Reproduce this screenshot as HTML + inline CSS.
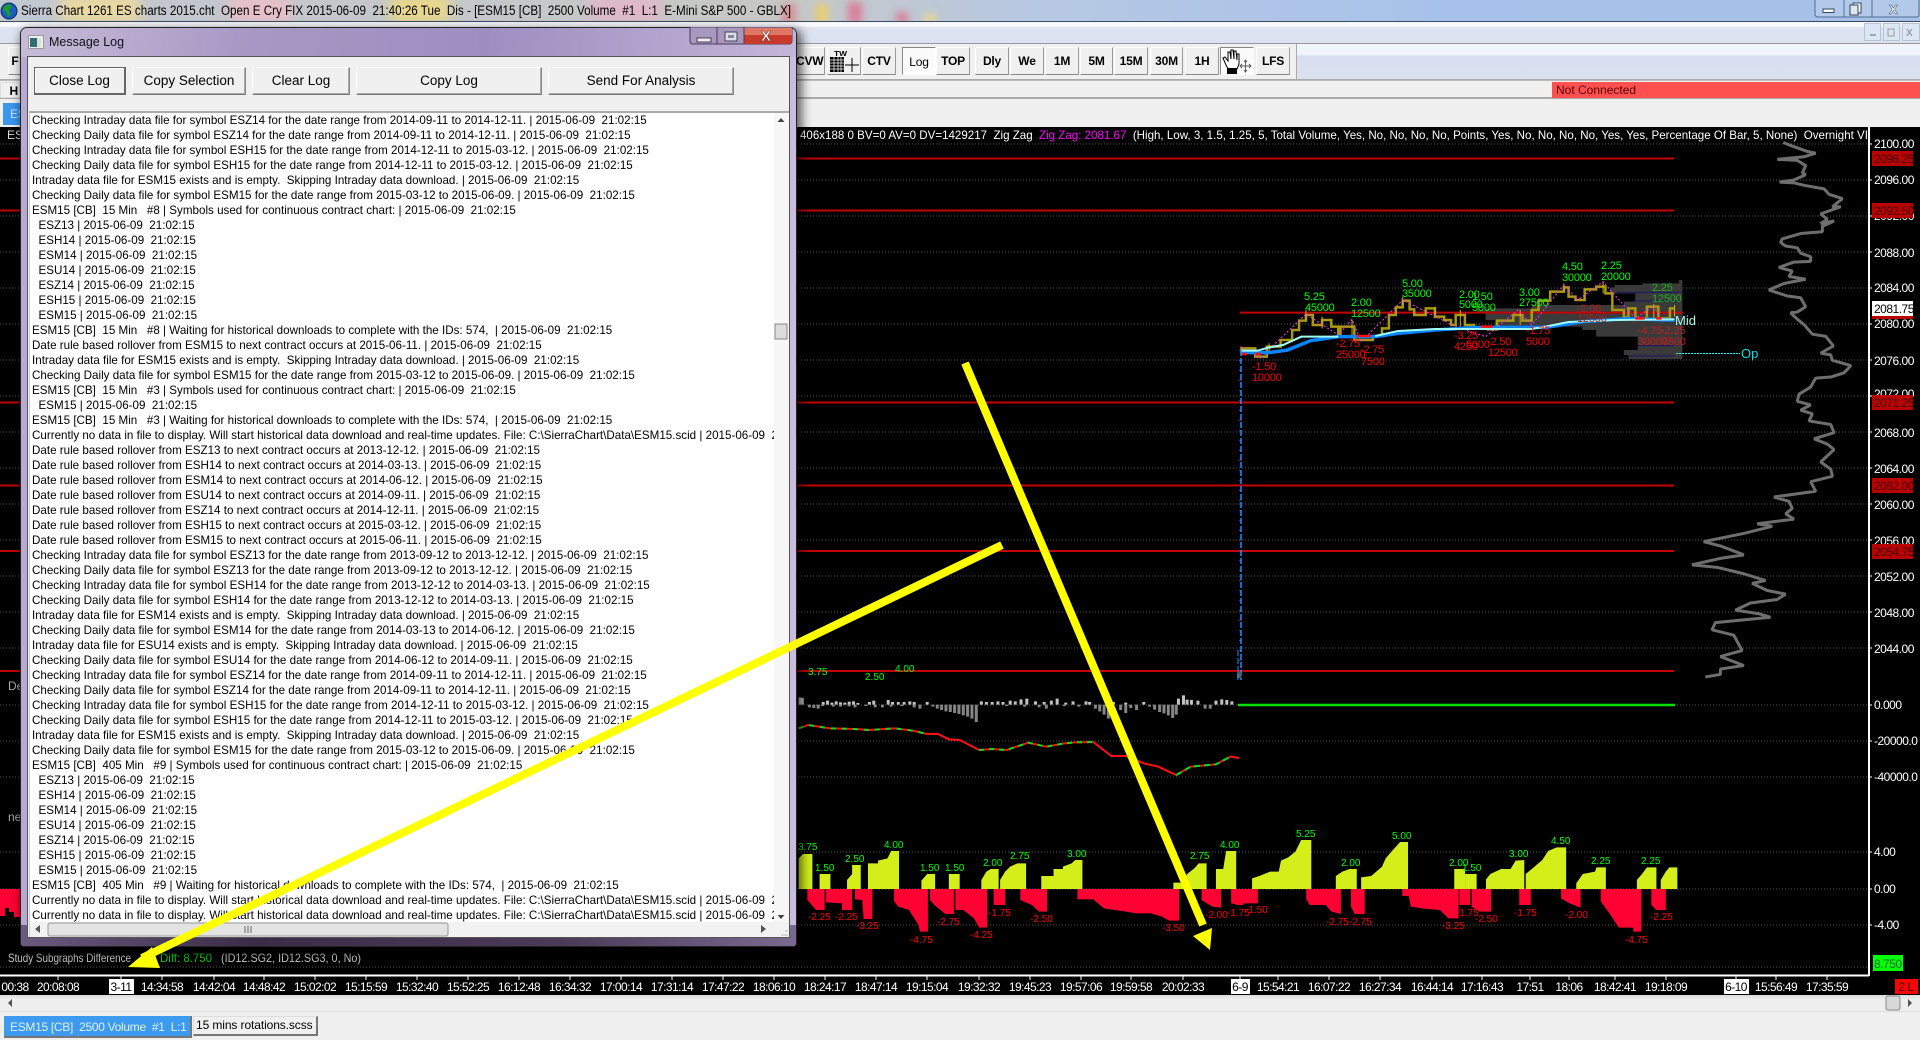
<!DOCTYPE html>
<html><head><meta charset="utf-8"><title>Sierra Chart</title>
<style>
html,body{margin:0;padding:0;width:1920px;height:1040px;overflow:hidden;background:#f0f0f0;font-family:"Liberation Sans",sans-serif}
.a{position:absolute}
.tb{position:absolute;top:47px;height:28px;background:#f0f0f0;border:1px solid;border-color:#fff #999 #888 #fff;box-sizing:border-box;font:bold 12px/26px "Liberation Sans",sans-serif;color:#000;text-align:center;letter-spacing:-.2px}
.btn{position:absolute;top:67px;height:28px;background:#f0f0f0;border:1px solid;border-color:#fff #888 #777 #fff;box-shadow:inset -1px -1px 0 #aaa;box-sizing:border-box;font:13.500px/25px "Liberation Sans",sans-serif;color:#000;text-align:center}
#log{position:absolute;left:2px;top:0;width:800px;font:12px/15px "Liberation Sans",sans-serif;color:#000;transform:scaleX(.968);transform-origin:0 0}
#log div{height:15px;white-space:pre}
svg text{font-family:"Liberation Sans",sans-serif}
</style></head><body>

<!-- title bar -->
<div class="a" style="left:0;top:0;width:1920px;height:21px;background:linear-gradient(90deg,#c2c8d2 0,#c7c8c5 40%,#b6c8e4 55%,#a7c2ea 75%,#a6c0e6 100%);overflow:hidden">
 <div class="a" style="left:60px;top:-6px;width:80px;height:30px;background:#ead9a0;filter:blur(7px)"></div>
 <div class="a" style="left:230px;top:-6px;width:60px;height:30px;background:#e8c0c8;filter:blur(7px)"></div>
 <div class="a" style="left:390px;top:-6px;width:60px;height:30px;background:#e9d78a;filter:blur(7px)"></div>
 <div class="a" style="left:590px;top:-6px;width:70px;height:30px;background:#e0b8c8;filter:blur(7px)"></div>
 <div class="a" style="left:782px;top:4px;width:14px;height:20px;background:#d89098;filter:blur(4px)"></div>
 <div class="a" style="left:816px;top:4px;width:12px;height:20px;background:#e8cf70;filter:blur(4px)"></div>
 <div class="a" style="left:848px;top:2px;width:14px;height:22px;background:#d88098;filter:blur(4px)"></div>
 <div class="a" style="left:896px;top:12px;width:12px;height:12px;background:#d88098;filter:blur(4px)"></div>
 <div class="a" style="left:924px;top:14px;width:12px;height:10px;background:#e8d890;filter:blur(4px)"></div>
</div>
<svg class="a" style="left:0;top:0" width="1920" height="21">
 <circle cx="9" cy="11" r="8" fill="#1a5cc0" stroke="#0a2a60"/><path d="M4 6l5-2 3 3-3 3 2 4-3 3-2-5-3-2z" fill="#1c9a2c"/>
 <text x="21" y="15" font-size="13.500" fill="#000" textLength="770" lengthAdjust="spacingAndGlyphs" xml:space="preserve">Sierra Chart 1261 ES charts 2015.cht  Open E Cry FIX 2015-06-09  21:40:26 Tue  Dis - [ESM15 [CB]  2500 Volume  #1  L:1  E-Mini S&amp;P 500 - GBLX]</text>
 <g fill="none" stroke="#4f6f96"><path d="M1815 0v14q0 3 3 3h99q2 0 2-3V0" fill="#c9daf0" fill-opacity=".35"/><path d="M1844 0v17M1872 0v17"/></g>
 <rect x="1823" y="9" width="11" height="3.500" fill="#fff" stroke="#34465e"/>
 <rect x="1853" y="3" width="8" height="10" fill="#fff" stroke="#34465e"/><rect x="1850" y="5" width="8" height="10" fill="#dfe6f0" stroke="#34465e"/>
 <text x="1889" y="14" font-size="13" font-weight="bold" fill="#fff" stroke="#34465e" stroke-width=".5">X</text>
</svg>
<div class="a" style="left:0;top:21px;width:1920px;height:1px;background:#3a4a60"></div>

<!-- menu bar -->
<div class="a" style="left:0;top:22px;width:1920px;height:21px;background:linear-gradient(#f4f6fb 0,#fafbfd 20%,#dfe4f2 25%,#dce2f1 100%);border-bottom:1px solid #999"></div>
<div class="a" style="left:1864px;top:23px;width:17px;height:18px;background:#dbe7f4;border:1px solid #b8c4d4;box-sizing:border-box"></div>
<div class="a" style="left:1883px;top:23px;width:17px;height:18px;background:#dbe7f4;border:1px solid #b8c4d4;box-sizing:border-box"></div>
<div class="a" style="left:1902px;top:23px;width:18px;height:18px;background:#dbe7f4;border:1px solid #b8c4d4;box-sizing:border-box"></div>
<svg class="a" style="left:1864px;top:23px" width="56" height="18"><rect x="6" y="11" width="6" height="2" fill="#9aa"/><rect x="24" y="6" width="6" height="7" fill="none" stroke="#999"/><text x="42" y="13" font-size="10" font-weight="bold" fill="#99a">X</text></svg>

<!-- toolbar -->
<div class="a" style="left:0;top:44px;width:1920px;height:35px;background:linear-gradient(#f2f4fa 0,#f2f4fa 30%,#d8deef 35%,#dce1f0 100%);border-bottom:1px solid #aaa"></div>
<div class="a" style="left:0;top:44px;width:1297px;height:35px;background:#f0f0f0;border-right:1px solid #aaa;box-sizing:border-box"></div>
<div class="tb" style="left:8px;width:14px">F</div>
<div class="tb" style="left:795px;width:30px;text-align:right;padding-right:2px">CVW</div>
<div class="tb" style="left:827px;width:34px"></div>
<svg class="a" style="left:827px;top:47px" width="34" height="28">
 <text x="7" y="9" font-size="7" font-weight="bold" fill="#000" textLength="13" lengthAdjust="spacingAndGlyphs">TW</text>
 <rect x="3" y="10" width="14" height="15" fill="#000"/><path d="M3 13h14M3 16h14M3 19h14M3 22h14M7 10v15M11 10v15M14 10v15" stroke="#fff" stroke-width=".7"/>
 <path d="M18 18h14M25 11v14" stroke="#000" stroke-width="1"/>
</svg>
<div class="tb" style="left:862px;width:34px">CTV</div>
<div class="tb" style="left:902px;width:34px;background:#fbfbfb;border-color:#888 #fff #fff #888;font-weight:normal;line-height:28px">Log</div>
<div class="tb" style="left:936px;width:34px">TOP</div>
<div class="tb" style="left:975px;width:34px">Dly</div>
<div class="tb" style="left:1010px;width:34px">We</div>
<div class="tb" style="left:1045px;width:34px">1M</div>
<div class="tb" style="left:1080px;width:33px">5M</div>
<div class="tb" style="left:1114px;width:34px">15M</div>
<div class="tb" style="left:1150px;width:33px">30M</div>
<div class="tb" style="left:1185px;width:34px">1H</div>
<div class="tb" style="left:1220px;width:34px;background:#fbfbfb;border-color:#888 #fff #fff #888"></div>
<svg class="a" style="left:1220px;top:47px" width="34" height="28">
 <path d="M6 18L3 11l2-1 3 4V5l2 0 1 7V3h2l1 9V4l2 0 1 9V7h2v10l-2 5H8z" fill="#fff" stroke="#000" stroke-width="1"/>
 <rect x="7" y="21" width="10" height="6" fill="#000"/>
 <path d="M20 19h11M25.500 13v12M22 17l-2 2 2 2M29 17l2 2-2 2M24 15l1.500-2 1.500 2M24 23l1.500 2 1.500-2" fill="none" stroke="#555" stroke-width=".9"/>
</svg>
<div class="tb" style="left:1256px;width:34px">LFS</div>

<!-- status row -->
<div class="a" style="left:0;top:80px;width:1920px;height:19px;background:#f0f0f0;border-top:1px solid #bbb;border-bottom:2px solid #aaa;box-sizing:border-box"></div>
<div class="tb" style="left:0;top:82px;height:16px;width:20px;font:bold 12px/16px 'Liberation Sans',sans-serif;text-align:right;padding-right:1px;border-color:#ddd">H</div>
<div class="a" style="left:1552px;top:82px;width:368px;height:16px;background:#ff5050;font:12px/17px 'Liberation Sans',sans-serif;color:#500;padding-left:4px;box-sizing:border-box">Not Connected</div>
<div class="a" style="left:0;top:100px;width:1920px;height:27px;background:#f0f0f0"></div>
<div class="a" style="left:3px;top:103px;width:20px;height:22px;background:#3a97ee;color:#cfe6ff;font:12px/22px 'Liberation Sans',sans-serif;padding-left:7px;box-sizing:border-box">ES</div>

<!-- chart -->
<div class="a" style="left:0;top:127px;width:1920px;height:868px;background:#000"></div>
<svg class="a" style="left:0;top:0" width="1920" height="1040" font-size="11">
 <!-- gridlines -->
 <g stroke="#555" stroke-width="1" stroke-dasharray="1 2">
  <path d="M0 144H1869M0 180H1869M0 216H1869M0 252H1869M0 288H1869M0 324H1869M0 360H1869M0 396H1869M0 432H1869M0 468H1869M0 504H1869M0 540H1869M0 576H1869M0 612H1869M0 648H1869M0 705H1869M0 741H1869M0 777H1869M0 852H1869M0 889H1869M0 925H1869M0 967H1869"/>
 </g>
 <!-- red lines -->
 <g stroke="#c40000" stroke-width="2">
  <path d="M0 158.500H1674M0 210.500H1674M0 402.500H1674M0 485.500H1674M0 551H1674M0 671H1674"/>
 </g>
 <text x="7" y="139" font-size="12" fill="#ddd">ES</text>
 <text x="8" y="690" font-size="12" fill="#aaa">De</text>
 <text x="8" y="821" font-size="12" fill="#aaa">ne</text>
 <path d="M0 889H20V917H14V912H9V908H5V916H0Z" fill="#ff0033"/>

 <!-- VAP and price cluster -->
 <g transform="translate(1200,230) scale(.4607,.33333)">
  <path d="M1047 150H1040V160H960V165H900V172H890V190H945V215H920V225H720V235H620V240H600V250H620V270H640V290H830V300H860V320H950V345H950V360H920V375H930V387H1047Z" fill="#3a3a3a"/>
  <path d="M905 187H1045M940 213H1045M950 347H1030M930 378H1030" fill="none" stroke="#17176a" stroke-width="1" vector-effect="non-scaling-stroke"/>
  <path d="M87 248H1048" stroke="#c40000" stroke-width="2" vector-effect="non-scaling-stroke"/>
  <path d="M90 368V355H120V380H145V350H175V330H200V300H215V272H230V255H245V285H265V270H285V290H300V312H305V290H335V330H375V318H395V295H410V255H425V232H440V212H455V238H465V255H490V235H510V260H530V270H545V285H555V255H575V285H595V292H625V298H645V272H680V255H700V272H720V240H735V212H760V185H790V172H800V200H815V210H835V178H860V170H880V190H895V240H920V262H930V235H945V265H970V230H995V265H1020V235H1030" fill="none" stroke="#a89a10" stroke-width="2.500" vector-effect="non-scaling-stroke"/>
  <path d="M150 340V372M230 240V270M265 260V295M330 270V320M440 200V225M510 230V265M565 240V290M695 240V285M790 160V185M875 155V190M985 222V265M1030 225V260" stroke="#c8b400" stroke-width="1" vector-effect="non-scaling-stroke"/>
  <path d="M88 350L130 385 230 252 300 315 330 268 350 335 440 210 555 290 620 320 690 240 720 285 790 165 820 210 875 155 945 265 985 228 1005 280" fill="none" stroke="#ff30ff" stroke-width="1" stroke-dasharray="2 2" vector-effect="non-scaling-stroke"/>
  <path d="M90 368H150L190 360 240 332 300 320H380L430 310 510 300 600 292H750L830 275 930 266 1030 270" fill="none" stroke="#0a84ff" stroke-width="3.500" vector-effect="non-scaling-stroke"/>
  <path d="M90 362H125L150 352 180 345 220 320H300M380 318L430 303 510 297H720L750 290 800 276 900 270 1030 268" fill="none" stroke="#9ffff5" stroke-width="2" vector-effect="non-scaling-stroke"/>
  <path d="M90 372h12M120 372h12M340 318h30M610 290h25M945 265h20M990 265h12" stroke="#ff1010" stroke-width="2.500" vector-effect="non-scaling-stroke"/>
 </g>
 <path d="M1241 350V680" stroke="#1e90ff" stroke-width="1.500" stroke-dasharray="6 2"/>
 <path d="M1240 350V680" stroke="#d040d0" stroke-width="1" stroke-dasharray="1 9"/>
 <rect x="1237" y="672" width="4" height="6" fill="#555"/>

 <g fill="#00ff00" letter-spacing="-.2">
  <text x="1304" y="300">5.25</text><text x="1305" y="311">45000</text>
  <text x="1351" y="306">2.00</text><text x="1351" y="317">12500</text>
  <text x="1402" y="287">5.00</text><text x="1402" y="297">35000</text>
  <text x="1459" y="298">2.00</text><text x="1459" y="308">5000</text>
  <text x="1472" y="300">1.50</text><text x="1472" y="311">5000</text>
  <text x="1519" y="296">3.00</text><text x="1519" y="306">27500</text>
  <text x="1562" y="270">4.50</text><text x="1562" y="281">30000</text>
  <text x="1601" y="269">2.25</text><text x="1601" y="280">20000</text>
  <text x="1652" y="291" fill="#19b319">2.25</text><text x="1652" y="302" fill="#19b319">12500</text>
 </g>
 <g fill="#ff0000" letter-spacing="-.2">
  <text x="1252" y="370">-1.50</text><text x="1252" y="381">10000</text>
  <text x="1336" y="347">-2.75</text><text x="1336" y="358">25000</text>
  <text x="1360" y="353">-2.75</text><text x="1361" y="365">7500</text>
  <text x="1454" y="339">-3.25</text><text x="1454" y="350">4250</text><text x="1466" y="348">5000</text>
  <text x="1487" y="345">-2.50</text><text x="1488" y="356">12500</text>
  <text x="1526" y="334">-1.75</text><text x="1526" y="345">5000</text>
  <text x="1577" y="312" fill="#c01818">-2.00</text><text x="1577" y="322" fill="#a82020">12500</text>
  <text x="1638" y="334" fill="#c02020">-4.75</text><text x="1661" y="334" fill="#c02020">-2.25</text>
  <text x="1638" y="345" fill="#d01818">30000</text><text x="1662" y="345" fill="#d01818">7500</text>
 </g>
 <text x="1675" y="325" font-size="13" fill="#a0fff0">Mid</text>
 <path d="M1676 353.500H1740" stroke="#00ffff" stroke-dasharray="2 1"/>
 <text x="1741" y="358" font-size="13" fill="#00e0e0">Op</text>

 <!-- overnight profile -->
 <g transform="translate(1600,130) scale(.3344,.357)">
  <polyline fill="none" stroke="#6e6e6e" stroke-width="3" vector-effect="non-scaling-stroke" stroke-linejoin="bevel" points="548,35 575,45 620,60 645,65 610,75 530,82 590,85 615,100 605,120 615,125 580,140 537,146 580,148 610,155 670,165 685,180 725,192 695,215 720,215 660,235 680,250 660,262 700,255 665,270 665,285 600,290 545,305 540,315 555,325 590,330 600,345 630,355 630,368 580,370 535,385 575,395 565,410 615,418 550,430 505,448 560,465 600,470 615,495 590,510 570,512 590,530 610,545 635,572 675,578 698,605 660,625 690,630 695,645 750,660 730,680 690,692 645,695 630,720 595,740 590,760 630,770 600,785 635,795 625,815 690,825 700,848 640,865 680,880 700,895 660,930 690,950 695,970 630,985 645,1012 520,1028 565,1040 575,1060 555,1075 580,1090 470,1103 515,1110 430,1130 310,1153 360,1165 430,1190 360,1200 275,1218 350,1225 430,1243 495,1262 455,1270 500,1290 555,1300 530,1315 450,1325 405,1345 475,1355 510,1365 345,1380 335,1400 400,1415 425,1458 360,1475 430,1500 360,1510 360,1525 315,1532"/>
 </g>

 <!-- header text -->
 <svg x="797" y="127" width="1071" height="20">
  <text x="3" y="12" font-size="12" fill="#fff" xml:space="preserve" textLength="1068" lengthAdjust="spacingAndGlyphs">406x188 0 BV=0 AV=0 DV=1429217  Zig Zag  <tspan fill="#ff00ff">Zig Zag: 2081.67</tspan>  (High, Low, 3, 1.5, 1.25, 5, Total Volume, Yes, No, No, No, No, Points, Yes, No, No, No, No, Yes, Yes, Percentage Of Bar, 5, None)  Overnight VI</text>
 </svg>

 <!-- lower panel shapes -->
 <g transform="translate(790,650) scale(.7220,.33333)">
  <g fill="#d4ee1a">
   <path d="M12 717V625L18 612H31V717Z"/><path d="M41 717V672H56V717Z"/><path d="M79 717V690L86 672V645H98V717Z"/><path d="M108 717V640H122V632L135 625 140 603H151V717Z"/><path d="M182 717V692L190 672H201V717Z"/><path d="M220 717V672H235V717Z"/><path d="M265 717V690L272 665 278 657H289V717Z"/><path d="M291 717V690L298 665 305 650 315 640H327V717Z"/><path d="M348 717V678H365V657H378V650L390 640 395 630H405V717Z"/><path d="M531 717V698H545L550 672 560 655 566 640H577V717Z"/><path d="M590 717V657H600L604 603H618V717Z"/><path d="M640 717V685L650 678 665 665H677L680 632 690 622 700 605 708 570H722V717Z"/><path d="M756 717V678L765 665 775 657H785V717Z"/><path d="M791 717V682L805 678 812 665 820 650 825 625 835 600 845 576H856V717Z"/><path d="M920 717V657H935V717Z"/><path d="M935 717V672H951V717Z"/><path d="M964 717V688L970 672 985 657H998L1005 632 1017 630V717Z"/><path d="M1019 717V672L1030 652 1042 630 1050 603 1062 592H1075V717Z"/><path d="M1089 717V700L1098 672 1115 665 1117 652H1130V717Z"/><path d="M1173 717V690L1180 672 1187 652H1200V717Z"/><path d="M1206 717V690L1213 665 1218 652H1229V717Z"/>
  </g>
  <g fill="#ff0033">
   <path d="M24 717V750L36 780H48V717Z"/><path d="M50 717V757L72 760V780H86V717Z"/><path d="M90 717V748L100 750 102 807H114V717Z"/><path d="M144 717V753L150 770 165 780 178 825 180 845H191V717Z"/><path d="M194 717V750L200 765 215 792H227V717Z"/><path d="M229 717V780H240L255 805 262 833H273V717Z"/><path d="M282 717V765H298V717Z"/><path d="M319 717V750L335 765 345 785H356V717Z"/><path d="M398 717V748H420L435 775 450 780 465 785 480 790H500L515 800 525 812H539V717Z"/><path d="M570 717V750L585 770 597 773V717Z"/><path d="M611 717V760L620 765H628V760H648V717Z"/><path d="M715 717V748L720 765H742L750 785 763 792V717Z"/><path d="M777 717V770L782 792H796V717Z"/><path d="M848 717V738H857L860 770 875 775 900 780 912 805H926V717Z"/><path d="M927 717V765H942V717Z"/><path d="M944 717V770L955 785H971V717Z"/><path d="M1010 717V765H1026V717Z"/><path d="M1068 717V745L1080 760 1095 773V717Z"/><path d="M1123 717V755L1135 790 1148 833H1168V845H1179V717Z"/><path d="M1193 717V765L1200 780H1213V717Z"/>
  </g>
  <!-- delta bars -->
  <path d="M14 164v-22M17 164v-20M46 164v-8M52 164v-12M58 164v-6M64 164v-10M70 164v-7M76 164v-6M82 164v-9M88 164v-10M94 164v-5M110 164v-8M116 164v-12M136 164v-14M142 164v-8M150 164v-8M158 164v-8M166 164v-10M172 164v-8M190 164v-8M265 164v-10M272 164v-8M280 164v-8M288 164v-10M295 164v-8M305 164v-12M312 164v-10M320 164v-16M328 164v-18M340 164v-10M352 164v-8M362 164v-12M370 164v-18M382 164v-6M392 164v-10M410 164v-10M415 164v-8M448 164v-8M465 164v-6M490 164v-8M538 164v-18M545 164v-28M550 164v-15M556 164v-14M565 164v-12M590 164v-12M598 164v-16M605 164v-14M612 164v-10" fill="none" stroke="#c2c2c2" stroke-width="3" vector-effect="non-scaling-stroke"/>
  <path d="M27 164v8M33 164v10M39 164v12M45 164v4M60 164v6M70 164v6M82 164v5M90 164v8M105 164v4M118 164v8M128 164v8M140 164v6M155 164v4M172 164v8M180 164v12M198 164v6M204 164v12M210 164v16M216 164v20M222 164v22M228 164v25M234 164v28M240 164v32M246 164v36M252 164v42M258 164v52M300 164v4M325 164v6M345 164v8M355 164v12M380 164v4M400 164v6M423 164v12M429 164v20M435 164v30M441 164v42M458 164v16M465 164v25M472 164v10M480 164v16M498 164v6M505 164v15M512 164v22M518 164v26M524 164v32M530 164v40M535 164v30M575 164v12M582 164v12" fill="none" stroke="#858585" stroke-width="3" vector-effect="non-scaling-stroke"/>
  <polyline fill="none" stroke="#ff1010" stroke-width="2" vector-effect="non-scaling-stroke" points="12,235 25,225 40,230 55,235 90,237 110,240 145,235 170,242 190,252 205,252 220,268 235,270 262,300 280,297 300,300 330,278 355,290 380,280 395,277 420,276 445,318 465,318 490,340 510,350 535,375 555,350 590,343 610,320 622,324"/>
  <polyline fill="none" stroke="#00e020" stroke-width="2" vector-effect="non-scaling-stroke" stroke-dasharray="5 6" points="12,235 25,225 40,230 55,235 90,237 110,240 145,235 170,242 190,252"/>
  <polyline fill="none" stroke="#00e020" stroke-width="2" vector-effect="non-scaling-stroke" stroke-dasharray="5 5" points="262,300 280,297 300,300 330,278 355,290 380,280 395,277 420,276"/>
  <polyline fill="none" stroke="#00e020" stroke-width="2" vector-effect="non-scaling-stroke" stroke-dasharray="6 4" points="535,375 555,350 590,343 610,320"/>
 </g>
 <path d="M1238 705H1675" stroke="#00e000" stroke-width="2.500"/>
 <path d="M1238 650V680" stroke="#1e90ff" stroke-dasharray="6 2"/>
 <g fill="#00ff00" font-size="10">
  <text x="808" y="675">3.75</text><text x="865" y="680">2.50</text><text x="895" y="672">4.00</text>
  <text x="798" y="850">3.75</text><text x="815" y="871">1.50</text><text x="845" y="862">2.50</text><text x="884" y="848">4.00</text><text x="920" y="871">1.50</text><text x="945" y="871">1.50</text><text x="983" y="866">2.00</text><text x="1010" y="859">2.75</text><text x="1067" y="857">3.00</text><text x="1190" y="859">2.75</text><text x="1220" y="848">4.00</text><text x="1296" y="837">5.25</text><text x="1341" y="866">2.00</text><text x="1392" y="839">5.00</text><text x="1449" y="866">2.00</text><text x="1462" y="871">1.50</text><text x="1509" y="857">3.00</text><text x="1551" y="844">4.50</text><text x="1591" y="864">2.25</text><text x="1641" y="864">2.25</text>
 </g>
 <g fill="#ff0000" font-size="10">
  <text x="808" y="920">-2.25</text><text x="835" y="920">-2.25</text><text x="856" y="929">-3.25</text><text x="910" y="943">-4.75</text><text x="937" y="925">-2.75</text><text x="970" y="938">-4.25</text><text x="988" y="916">-1.75</text><text x="1030" y="922">-2.50</text><text x="1162" y="931">-3.50</text><text x="1205" y="918">-2.00</text><text x="1227" y="916">-1.75</text><text x="1245" y="913">-1.50</text><text x="1326" y="925">-2.75</text><text x="1349" y="925">-2.75</text><text x="1442" y="929">-3.25</text><text x="1456" y="916">-1.75</text><text x="1475" y="922">-2.50</text><text x="1514" y="916">-1.75</text><text x="1565" y="918">-2.00</text><text x="1625" y="943">-4.75</text><text x="1650" y="920">-2.25</text>
 </g>

 <!-- axes -->
 <path d="M1869 127V976M0 975.500H1869" stroke="#fff" stroke-width="2" fill="none"/>
 <g fill="#fff" font-size="12" letter-spacing="-.5">
  <text x="1874" y="148">2100.00</text><text x="1874" y="184">2096.00</text><text x="1874" y="220">2092.00</text><text x="1874" y="257">2088.00</text><text x="1874" y="292">2084.00</text><text x="1874" y="328">2080.00</text><text x="1874" y="365">2076.00</text><text x="1874" y="398">2072.00</text><text x="1874" y="437">2068.00</text><text x="1874" y="473">2064.00</text><text x="1874" y="509">2060.00</text><text x="1874" y="545">2056.00</text><text x="1874" y="581">2052.00</text><text x="1874" y="617">2048.00</text><text x="1874" y="653">2044.00</text>
  <text x="1874" y="709">0.000</text><text x="1874" y="745">-20000.0</text><text x="1874" y="781">-40000.0</text><text x="1874" y="856">4.00</text><text x="1874" y="893">0.00</text><text x="1874" y="929">-4.00</text>
 </g>
 <g stroke="#fff"><path d="M1869 144h3M1869 180h3M1869 216h3M1869 252h3M1869 288h3M1869 324h3M1869 360h3M1869 396h3M1869 432h3M1869 468h3M1869 504h3M1869 540h3M1869 576h3M1869 612h3M1869 648h3M1869 705h3M1869 741h3M1869 777h3M1869 852h3M1869 889h3M1869 925h3"/></g>
 <g fill="#bb0000">
  <rect x="1872" y="151" width="41" height="15"/><rect x="1872" y="203" width="41" height="15"/><rect x="1872" y="395" width="41" height="15"/><rect x="1872" y="478" width="41" height="15"/><rect x="1872" y="544" width="41" height="15"/>
 </g>
 <rect x="1872" y="301" width="41" height="15" fill="#fff"/><rect x="1872" y="316" width="41" height="3" fill="#bb0000"/>
 <rect x="1873" y="955" width="30" height="16" fill="#00ff00"/>
 <g font-size="12" letter-spacing="-.5" fill="#400">
  <text x="1874" y="163">2098.25</text><text x="1874" y="215">2092.50</text><text x="1874" y="407">2071.25</text><text x="1874" y="490">2062.00</text><text x="1874" y="556">2054.75</text>
  <text x="1874" y="313" fill="#000">2081.75</text><text x="1874" y="968" fill="#063">8.750</text>
 </g>

 <!-- x axis -->
 <g stroke="#fff"><path d="M58 976v4M121 976v4M162 976v4M214 976v4M264 976v4M315 976v4M366 976v4M417 976v4M468 976v4M519 976v4M570 976v4M621 976v4M672 976v4M723 976v4M774 976v4M825 976v4M876 976v4M927 976v4M979 976v4M1030 976v4M1081 976v4M1131 976v4M1183 976v4M1240 976v4M1278 976v4M1329 976v4M1380 976v4M1432 976v4M1482 976v4M1530 976v4M1569 976v4M1615 976v4M1666 976v4M1736 976v4M1776 976v4M1827 976v4"/></g>
 <rect x="109" y="979" width="25" height="15" fill="#fff"/><rect x="1231" y="979" width="19" height="15" fill="#fff"/><rect x="1724" y="979" width="25" height="15" fill="#fff"/><rect x="1895" y="979" width="23" height="15" fill="#ff0000"/>
 <g font-size="12" fill="#fff" text-anchor="middle" letter-spacing="-.55">
  <text x="15" y="991">00:38</text><text x="58" y="991">20:08:08</text><text x="162" y="991">14:34:58</text><text x="214" y="991">14:42:04</text><text x="264" y="991">14:48:42</text><text x="315" y="991">15:02:02</text><text x="366" y="991">15:15:59</text><text x="417" y="991">15:32:40</text><text x="468" y="991">15:52:25</text><text x="519" y="991">16:12:48</text><text x="570" y="991">16:34:32</text><text x="621" y="991">17:00:14</text><text x="672" y="991">17:31:14</text><text x="723" y="991">17:47:22</text><text x="774" y="991">18:06:10</text><text x="825" y="991">18:24:17</text><text x="876" y="991">18:47:14</text><text x="927" y="991">19:15:04</text><text x="979" y="991">19:32:32</text><text x="1030" y="991">19:45:23</text><text x="1081" y="991">19:57:06</text><text x="1131" y="991">19:59:58</text><text x="1183" y="991">20:02:33</text><text x="1278" y="991">15:54:21</text><text x="1329" y="991">16:07:22</text><text x="1380" y="991">16:27:34</text><text x="1432" y="991">16:44:14</text><text x="1482" y="991">17:16:43</text><text x="1530" y="991">17:51</text><text x="1569" y="991">18:06</text><text x="1615" y="991">18:42:41</text><text x="1666" y="991">19:18:09</text><text x="1776" y="991">15:56:49</text><text x="1827" y="991">17:35:59</text>
  <text x="121" y="991" fill="#000">3-11</text><text x="1240" y="991" fill="#000">6-9</text><text x="1736" y="991" fill="#000">6-10</text><text x="1906" y="991" fill="#300">2 L</text>
 </g>
 <text x="8" y="962" font-size="12" fill="#c8c8c8" xml:space="preserve" textLength="123" lengthAdjust="spacingAndGlyphs">Study Subgraphs Difference</text>
 <text x="160" y="962" font-size="12" fill="#00d000" textLength="52" lengthAdjust="spacingAndGlyphs">Diff: 8.750</text>
 <text x="221" y="962" font-size="12" fill="#c8c8c8" textLength="140" lengthAdjust="spacingAndGlyphs">(ID12.SG2, ID12.SG3, 0, No)</text>
</svg>

<!-- bottom scrollbar and tabs -->
<div class="a" style="left:0;top:995px;width:1920px;height:16px;background:linear-gradient(#dcdcdc,#efefef 30%,#eee);border-bottom:1px solid #ddd"></div>
<svg class="a" style="left:0;top:995px" width="1920" height="16"><path d="M8 8l4-4v8z" fill="#555"/><path d="M1908 4l4 4-4 4z" fill="#555"/><rect x="1886" y="1" width="14" height="14" rx="2" fill="#d8d8d8" stroke="#888"/></svg>
<div class="a" style="left:4px;top:1016px;width:188px;height:22px;background:#3d9bef;border-right:2px solid #777;border-bottom:2px solid #777;box-sizing:border-box;color:#e0f0ff;font:12px/23px 'Liberation Sans',sans-serif;letter-spacing:-.3px;padding-left:6px;white-space:pre;overflow:hidden">ESM15 [CB]  2500 Volume  #1  L:1</div>
<div class="a" style="left:193px;top:1016px;width:125px;height:20px;background:#f0f0f0;border:1px solid;border-color:#ddd #777 #777 #ddd;border-right-width:2px;border-bottom-width:2px;box-sizing:border-box;color:#000;font:12px/17px 'Liberation Sans',sans-serif;letter-spacing:-.1px;padding-left:2px;white-space:pre;overflow:hidden">15 mins rotations.scss</div>

<!-- message log window -->
<div class="a" style="left:20px;top:27px;width:777px;height:920px;border:1px solid #222;box-sizing:border-box;border-radius:7px 7px 4px 4px;background:linear-gradient(90deg,#b8a9d0,#bfb2d6 50%,#c8bddc);box-shadow:3px 4px 10px 2px rgba(0,0,0,.6)"></div>
<div class="a" style="left:21px;top:28px;width:775px;height:29px;border-radius:6px 6px 0 0;background:linear-gradient(100deg,#c6bcd8 0,#a896c4 30%,#9f8dc0 60%,#b6a6cf 85%,#c4b6d8 100%)"></div>
<div class="a" style="left:21px;top:925px;width:775px;height:21px;border-radius:0 0 3px 3px;background:linear-gradient(90deg,#6a5a80,#3c2c48 30%,#4c3a58 70%,#7a6a90)"></div>
<svg class="a" style="left:28px;top:35px" width="16" height="16"><rect x=".5" y=".5" width="15" height="13" fill="#eee" stroke="#999"/><rect x="2" y="3" width="7" height="9" fill="#2f6f78"/><rect x="9" y="3" width="4" height="9" fill="#d8e0d8"/></svg>
<div class="a" style="left:49px;top:33px;font:12.500px/18px 'Liberation Sans',sans-serif;color:#111">Message Log</div>
<svg class="a" style="left:689px;top:27px" width="104" height="20">
 <path d="M1 0v14q0 3 3 3h96q3 0 3-3V0z" fill="#a898c0" stroke="#4a3a5a"/>
 <path d="M55 1h48v13q0 3-3 3H55z" fill="#c83a2a"/><path d="M55 1h48v7H55z" fill="#e89080" opacity=".7"/>
 <path d="M28 0v17M55 0v17" stroke="#4a3a5a"/>
 <rect x="8" y="11" width="14" height="4" fill="#eee" stroke="#445"/>
 <rect x="36" y="5" width="12" height="9" fill="#dde" stroke="#445"/><rect x="39" y="8" width="6" height="3" fill="#889"/>
 <text x="72" y="14" font-size="15" font-weight="bold" fill="#fff" stroke="#5a2a20" stroke-width=".5">X</text>
</svg>
<div class="a" style="left:27px;top:56px;width:763px;height:882px;background:#f0f0f0;border:1px solid #555;box-sizing:border-box;overflow:hidden"></div>
<div class="btn" style="left:34px;width:92px;border-color:#666;border-width:1px 2px 2px 1px;box-shadow:inset 1px 1px 0 #fff">Close Log</div>
<div class="btn" style="left:132px;width:114px">Copy Selection</div>
<div class="btn" style="left:252px;width:98px">Clear Log</div>
<div class="btn" style="left:356px;width:186px">Copy Log</div>
<div class="btn" style="left:548px;width:186px">Send For Analysis</div>
<div class="a" style="left:29px;top:111px;width:760px;height:826px;background:#fff;border-top:2px solid #aaa;border-left:1px solid #ccc;box-sizing:border-box"></div>
<div class="a" style="left:30px;top:113px;width:744px;height:809px;overflow:hidden">
<div id="log">
<div>Checking Intraday data file for symbol ESZ14 for the date range from 2014-09-11 to 2014-12-11. | 2015-06-09  21:02:15</div>
<div>Checking Daily data file for symbol ESZ14 for the date range from 2014-09-11 to 2014-12-11. | 2015-06-09  21:02:15</div>
<div>Checking Intraday data file for symbol ESH15 for the date range from 2014-12-11 to 2015-03-12. | 2015-06-09  21:02:15</div>
<div>Checking Daily data file for symbol ESH15 for the date range from 2014-12-11 to 2015-03-12. | 2015-06-09  21:02:15</div>
<div>Intraday data file for ESM15 exists and is empty.  Skipping Intraday data download. | 2015-06-09  21:02:15</div>
<div>Checking Daily data file for symbol ESM15 for the date range from 2015-03-12 to 2015-06-09. | 2015-06-09  21:02:15</div>
<div>ESM15 [CB]  15 Min   #8 | Symbols used for continuous contract chart: | 2015-06-09  21:02:15</div>
<div>  ESZ13 | 2015-06-09  21:02:15</div>
<div>  ESH14 | 2015-06-09  21:02:15</div>
<div>  ESM14 | 2015-06-09  21:02:15</div>
<div>  ESU14 | 2015-06-09  21:02:15</div>
<div>  ESZ14 | 2015-06-09  21:02:15</div>
<div>  ESH15 | 2015-06-09  21:02:15</div>
<div>  ESM15 | 2015-06-09  21:02:15</div>
<div>ESM15 [CB]  15 Min   #8 | Waiting for historical downloads to complete with the IDs: 574,  | 2015-06-09  21:02:15</div>
<div>Date rule based rollover from ESM15 to next contract occurs at 2015-06-11. | 2015-06-09  21:02:15</div>
<div>Intraday data file for ESM15 exists and is empty.  Skipping Intraday data download. | 2015-06-09  21:02:15</div>
<div>Checking Daily data file for symbol ESM15 for the date range from 2015-03-12 to 2015-06-09. | 2015-06-09  21:02:15</div>
<div>ESM15 [CB]  15 Min   #3 | Symbols used for continuous contract chart: | 2015-06-09  21:02:15</div>
<div>  ESM15 | 2015-06-09  21:02:15</div>
<div>ESM15 [CB]  15 Min   #3 | Waiting for historical downloads to complete with the IDs: 574,  | 2015-06-09  21:02:15</div>
<div>Currently no data in file to display. Will start historical data download and real-time updates. File: C:\SierraChart\Data\ESM15.scid | 2015-06-09  21:02:15</div>
<div>Date rule based rollover from ESZ13 to next contract occurs at 2013-12-12. | 2015-06-09  21:02:15</div>
<div>Date rule based rollover from ESH14 to next contract occurs at 2014-03-13. | 2015-06-09  21:02:15</div>
<div>Date rule based rollover from ESM14 to next contract occurs at 2014-06-12. | 2015-06-09  21:02:15</div>
<div>Date rule based rollover from ESU14 to next contract occurs at 2014-09-11. | 2015-06-09  21:02:15</div>
<div>Date rule based rollover from ESZ14 to next contract occurs at 2014-12-11. | 2015-06-09  21:02:15</div>
<div>Date rule based rollover from ESH15 to next contract occurs at 2015-03-12. | 2015-06-09  21:02:15</div>
<div>Date rule based rollover from ESM15 to next contract occurs at 2015-06-11. | 2015-06-09  21:02:15</div>
<div>Checking Intraday data file for symbol ESZ13 for the date range from 2013-09-12 to 2013-12-12. | 2015-06-09  21:02:15</div>
<div>Checking Daily data file for symbol ESZ13 for the date range from 2013-09-12 to 2013-12-12. | 2015-06-09  21:02:15</div>
<div>Checking Intraday data file for symbol ESH14 for the date range from 2013-12-12 to 2014-03-13. | 2015-06-09  21:02:15</div>
<div>Checking Daily data file for symbol ESH14 for the date range from 2013-12-12 to 2014-03-13. | 2015-06-09  21:02:15</div>
<div>Intraday data file for ESM14 exists and is empty.  Skipping Intraday data download. | 2015-06-09  21:02:15</div>
<div>Checking Daily data file for symbol ESM14 for the date range from 2014-03-13 to 2014-06-12. | 2015-06-09  21:02:15</div>
<div>Intraday data file for ESU14 exists and is empty.  Skipping Intraday data download. | 2015-06-09  21:02:15</div>
<div>Checking Daily data file for symbol ESU14 for the date range from 2014-06-12 to 2014-09-11. | 2015-06-09  21:02:15</div>
<div>Checking Intraday data file for symbol ESZ14 for the date range from 2014-09-11 to 2014-12-11. | 2015-06-09  21:02:15</div>
<div>Checking Daily data file for symbol ESZ14 for the date range from 2014-09-11 to 2014-12-11. | 2015-06-09  21:02:15</div>
<div>Checking Intraday data file for symbol ESH15 for the date range from 2014-12-11 to 2015-03-12. | 2015-06-09  21:02:15</div>
<div>Checking Daily data file for symbol ESH15 for the date range from 2014-12-11 to 2015-03-12. | 2015-06-09  21:02:15</div>
<div>Intraday data file for ESM15 exists and is empty.  Skipping Intraday data download. | 2015-06-09  21:02:15</div>
<div>Checking Daily data file for symbol ESM15 for the date range from 2015-03-12 to 2015-06-09. | 2015-06-09  21:02:15</div>
<div>ESM15 [CB]  405 Min   #9 | Symbols used for continuous contract chart: | 2015-06-09  21:02:15</div>
<div>  ESZ13 | 2015-06-09  21:02:15</div>
<div>  ESH14 | 2015-06-09  21:02:15</div>
<div>  ESM14 | 2015-06-09  21:02:15</div>
<div>  ESU14 | 2015-06-09  21:02:15</div>
<div>  ESZ14 | 2015-06-09  21:02:15</div>
<div>  ESH15 | 2015-06-09  21:02:15</div>
<div>  ESM15 | 2015-06-09  21:02:15</div>
<div>ESM15 [CB]  405 Min   #9 | Waiting for historical downloads to complete with the IDs: 574,  | 2015-06-09  21:02:15</div>
<div>Currently no data in file to display. Will start historical data download and real-time updates. File: C:\SierraChart\Data\ESM15.scid | 2015-06-09  21:02:15</div>
<div>Currently no data in file to display. Will start historical data download and real-time updates. File: C:\SierraChart\Data\ESM15.scid | 2015-06-09  21:02:15</div>
</div></div>
<!-- log scrollbars -->
<svg class="a" style="left:30px;top:113px" width="759" height="824">
 <rect x="744" y="0" width="15" height="809" fill="#f7f7f7"/>
 <path d="M751 5l-3.500 4h7zM751 806l-3.500-4h7z" fill="#444"/>
 <rect x="745" y="211" width="12" height="15" fill="#dcdcdc" stroke="#888"/>
 <rect x="0" y="809" width="759" height="15" fill="#f2f2f2"/>
 <path d="M5 816l5-4v8zM736 816l-5-4v8z" fill="#555"/>
 <rect x="18" y="810" width="400" height="13" rx="2" fill="#e3e3e3" stroke="#999"/>
 <path d="M215 813v7M218 813v7M221 813v7" stroke="#666"/>
 <path d="M758 822l-7 0M758 818l-3 0" stroke="#bbb"/>
</svg>

<!-- yellow arrows -->
<svg class="a" style="left:0;top:0" width="1920" height="1040">
 <path d="M1002 545L142 958" stroke="#ffff00" stroke-width="8" fill="none"/>
 <path d="M128 967L152 947 160 968Z" fill="#ffff00"/>
 <path d="M965 363L1203 925" stroke="#ffff00" stroke-width="8" fill="none"/>
 <path d="M1210 950L1193 936 1212 928Z" fill="#ffff00"/>
</svg>
</body></html>
